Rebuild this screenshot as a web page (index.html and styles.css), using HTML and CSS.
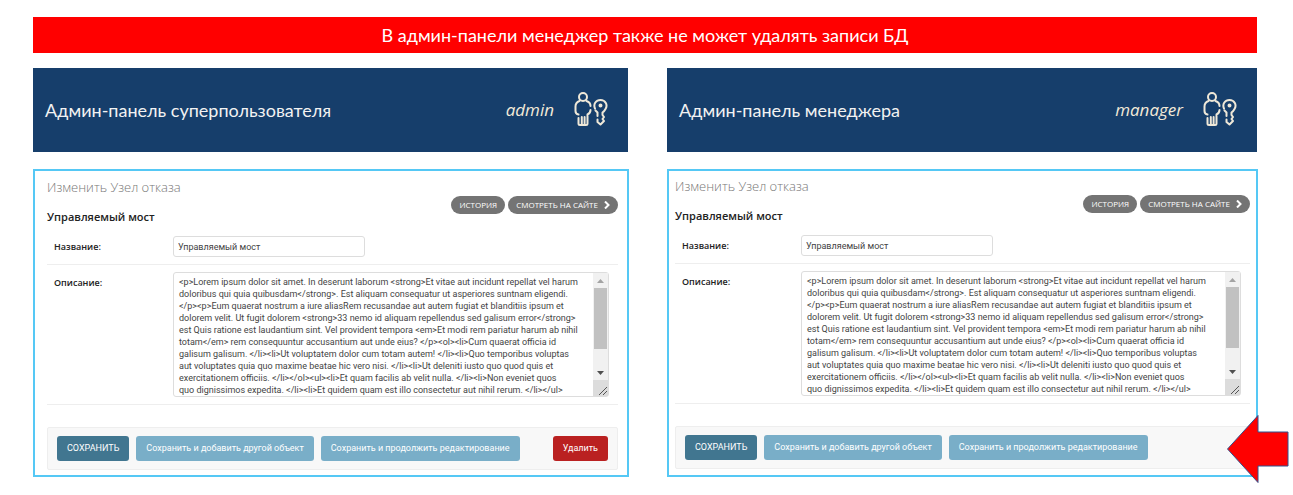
FILE: index.html
```
<!DOCTYPE html>
<html lang="ru">
<head>
<meta charset="utf-8">
<title>Админ-панель</title>
<link rel="stylesheet" href="styles.css">
</head>
<body>
<svg class="sprite" aria-hidden="true">
  <symbol id="user-key" viewBox="0 0 34 36">
    <g fill="none" stroke="#efe8d8" stroke-width="2" stroke-linecap="round" stroke-linejoin="round">
      <circle cx="9" cy="5" r="4"/>
      <path d="M5.500 9C2.500 10 1.500 12 1.500 14.500V19Q1.500 22 4.500 22.500"/>
      <path d="M12.500 9C15.500 10 16.500 12 16.500 14M16.500 18Q16.500 21 13.500 22.500V31.500Q13.500 33 12 33H6Q4.500 33 4.500 31.500V26M7.800 25V32M10.600 25V32"/>
      <path d="M21 16.500C19 12 22 8 26.500 8C31.500 8 34 13 31.500 17Q30.500 19 28.500 20.500V23L30 25L28.500 27L30 29L26.500 32.500L23.500 30V27.500M21.500 18.500L23.500 20.500V24"/>
      <circle cx="26.500" cy="13.500" r="1"/>
    </g>
  </symbol>
  <symbol id="scroll" viewBox="0 0 15 123" preserveAspectRatio="none">
    <path fill="#f1f1f1" d="M0 0H15V107H0Z"/>
    <path fill="#c1c1c1" d="M1 15H14V76H1Z"/>
    <path fill="#a3a3a3" d="M4 10L7.500 6L11 10Z"/>
    <path fill="#505050" d="M4 98L7.500 102L11 98Z"/>
    <path fill="#dcdcdc" d="M0 107H15V123H0Z"/>
    <path fill="none" stroke="#555" d="M6 122L14 114M10 122L14 118"/>
  </symbol>
</svg>
<main class="page">
  <h1 class="banner">В админ-панели менеджер также не может удалять записи БД</h1>

  <header class="head">
    <h2 class="head-title">Админ-панель суперпользователя</h2>
    <span class="role">admin</span>
    <svg class="role-icon" aria-hidden="true"><use href="#user-key"/></svg>
  </header>
  <header class="head">
    <h2 class="head-title">Админ-панель менеджера</h2>
    <span class="role">manager</span>
    <svg class="role-icon" aria-hidden="true"><use href="#user-key"/></svg>
  </header>

  <form class="panel panel-admin">
    <h3 class="title">Изменить Узел отказа</h3>
    <div class="tools">
      <a class="pill" href="#">ИСТОРИЯ</a>
      <a class="pill" href="#">СМОТРЕТЬ НА САЙТЕ <svg class="chevron" viewBox="0 0 6 8" aria-hidden="true"><path d="M1 0.500L4.500 4L1 7.500"/></svg></a>
    </div>
    <h4 class="object">Управляемый мост</h4>
    <div class="row">
      <label class="label" for="name-a">Название:</label>
      <input class="input" id="name-a" type="text" value="Управляемый мост">
    </div>
    <div class="row">
      <label class="label" for="text-a">Описание:</label>
      <div class="area">
        <textarea class="text" id="text-a" wrap="off">&lt;p&gt;Lorem ipsum dolor sit amet. In deserunt laborum &lt;strong&gt;Et vitae aut incidunt repellat vel harum
doloribus qui quia quibusdam&lt;/strong&gt;. Est aliquam consequatur ut asperiores suntnam eligendi.
&lt;/p&gt;&lt;p&gt;Eum quaerat nostrum a iure aliasRem recusandae aut autem fugiat et blanditiis ipsum et
dolorem velit. Ut fugit dolorem &lt;strong&gt;33 nemo id aliquam repellendus sed galisum error&lt;/strong&gt;
est Quis ratione est laudantium sint. Vel provident tempora &lt;em&gt;Et modi rem pariatur harum ab nihil
totam&lt;/em&gt; rem consequuntur accusantium aut unde eius? &lt;/p&gt;&lt;ol&gt;&lt;li&gt;Cum quaerat officia id
galisum galisum. &lt;/li&gt;&lt;li&gt;Ut voluptatem dolor cum totam autem! &lt;/li&gt;&lt;li&gt;Quo temporibus voluptas
aut voluptates quia quo maxime beatae hic vero nisi. &lt;/li&gt;&lt;li&gt;Ut deleniti iusto quo quod quis et
exercitationem officiis. &lt;/li&gt;&lt;/ol&gt;&lt;ul&gt;&lt;li&gt;Et quam facilis ab velit nulla. &lt;/li&gt;&lt;li&gt;Non eveniet quos
quo dignissimos expedita. &lt;/li&gt;&lt;li&gt;Et quidem quam est illo consectetur aut nihil rerum. &lt;/li&gt;&lt;/ul&gt;</textarea>
        <svg class="scroll" aria-hidden="true"><use href="#scroll"/></svg>
      </div>
    </div>
    <div class="submit">
      <button class="btn btn-main" type="button">СОХРАНИТЬ</button>
      <button class="btn" type="button">Сохранить и добавить другой объект</button>
      <button class="btn" type="button">Сохранить и продолжить редактирование</button>
      <button class="btn btn-delete" type="button">Удалить</button>
    </div>
  </form>

  <form class="panel panel-manager">
    <h3 class="title">Изменить Узел отказа</h3>
    <div class="tools">
      <a class="pill" href="#">ИСТОРИЯ</a>
      <a class="pill" href="#">СМОТРЕТЬ НА САЙТЕ <svg class="chevron" viewBox="0 0 6 8" aria-hidden="true"><path d="M1 0.500L4.500 4L1 7.500"/></svg></a>
    </div>
    <h4 class="object">Управляемый мост</h4>
    <div class="row">
      <label class="label" for="name-m">Название:</label>
      <input class="input" id="name-m" type="text" value="Управляемый мост">
    </div>
    <div class="row">
      <label class="label" for="text-m">Описание:</label>
      <div class="area">
        <textarea class="text" id="text-m" wrap="off">&lt;p&gt;Lorem ipsum dolor sit amet. In deserunt laborum &lt;strong&gt;Et vitae aut incidunt repellat vel harum
doloribus qui quia quibusdam&lt;/strong&gt;. Est aliquam consequatur ut asperiores suntnam eligendi.
&lt;/p&gt;&lt;p&gt;Eum quaerat nostrum a iure aliasRem recusandae aut autem fugiat et blanditiis ipsum et
dolorem velit. Ut fugit dolorem &lt;strong&gt;33 nemo id aliquam repellendus sed galisum error&lt;/strong&gt;
est Quis ratione est laudantium sint. Vel provident tempora &lt;em&gt;Et modi rem pariatur harum ab nihil
totam&lt;/em&gt; rem consequuntur accusantium aut unde eius? &lt;/p&gt;&lt;ol&gt;&lt;li&gt;Cum quaerat officia id
galisum galisum. &lt;/li&gt;&lt;li&gt;Ut voluptatem dolor cum totam autem! &lt;/li&gt;&lt;li&gt;Quo temporibus voluptas
aut voluptates quia quo maxime beatae hic vero nisi. &lt;/li&gt;&lt;li&gt;Ut deleniti iusto quo quod quis et
exercitationem officiis. &lt;/li&gt;&lt;/ol&gt;&lt;ul&gt;&lt;li&gt;Et quam facilis ab velit nulla. &lt;/li&gt;&lt;li&gt;Non eveniet quos
quo dignissimos expedita. &lt;/li&gt;&lt;li&gt;Et quidem quam est illo consectetur aut nihil rerum. &lt;/li&gt;&lt;/ul&gt;</textarea>
        <svg class="scroll" aria-hidden="true"><use href="#scroll"/></svg>
      </div>
    </div>
    <div class="submit">
      <button class="btn btn-main" type="button">СОХРАНИТЬ</button>
      <button class="btn" type="button">Сохранить и добавить другой объект</button>
      <button class="btn" type="button">Сохранить и продолжить редактирование</button>
    </div>
    <svg class="arrow" viewBox="0 0 63 70" aria-hidden="true"><path d="M1.500 35L32 1.500V18H62V52H32V68.500Z"/></svg>
  </form>
</main>
</body>
</html>
```
FILE: styles.css
```
* { box-sizing: border-box; }
body { margin: 0; background: #fff; color: #333; font: 9px/12px "Open Sans", "Noto Sans", sans-serif; }
h1, h2, h3, h4 { margin: 0; }
.sprite { position: absolute; width: 0; height: 0; }
.page {
  display: grid;
  grid-template-columns: 595fr 590fr;
  column-gap: 39px;
  padding: 17px 36px 18px 33px;
}
.banner {
  grid-column: 1 / -1;
  margin-bottom: 15px;
  padding: 6px;
  background: #f00;
  color: #fff;
  font: 400 18px/24px Lato, "Open Sans", sans-serif;
  text-align: center;
}
.head {
  display: flex;
  align-items: center;
  padding: 24px 20px 24px 12px;
  margin-bottom: 17px;
  background: #163e6b;
  color: #f2f2f2;
  font: 400 18px/24px Lato, "Open Sans", sans-serif;
}
.head-title { flex: 1; font: inherit; }
.role { color: #f3ead8; font-family: "Open Sans", sans-serif; font-size: 17px; font-style: italic; }
.role-icon { width: 34px; height: 36px; margin-left: 20px; }

.panel {
  position: relative;
  display: grid;
  grid-template-columns: 1fr auto;
  margin-right: -1px;
  border: 2px solid #55c8f5;
}
.panel-admin { padding: 6px 9px 5px 12px; }
.panel-manager { padding: 5px 6px 6px 6px; }
.title { color: #777; font-size: 13px; line-height: 20px; font-weight: 300; }
.tools { grid-row: 1 / 3; grid-column: 2; display: flex; align-self: start; gap: 3px; padding-top: 19px; }
.pill {
  padding: 3px 8px;
  border-radius: 9px;
  background: #747474;
  color: #fff;
  font-size: 8px;
  font-weight: 500;
  text-decoration: none;
}
.chevron { width: 6px; height: 8px; margin-left: 4px; fill: none; stroke: #fff; stroke-width: 2; vertical-align: -1px; }
.object { grid-column: 1; margin-top: 11px; color: #222; font-size: 11px; line-height: 18px; font-weight: 600; }
.row {
  grid-column: 1 / -1;
  display: grid;
  grid-template-columns: 119px 1fr;
  padding: 7px 9px 7px 7px;
  border-bottom: 1px solid #eee;
}
.object + .row { padding-top: 10px; }
.label { padding-top: 5px; color: #222; font-weight: 600; }
.input {
  width: 192px;
  height: 21px;
  padding: 0 4px;
  border: 1px solid #ddd;
  border-radius: 3px;
  background: #fff;
  color: #444;
  font: 9px/12px Roboto, "Open Sans", sans-serif;
}
.area { position: relative; height: 125px; }
.text {
  display: block;
  width: 100%;
  height: 100%;
  padding: 3px 5px;
  border: 1px solid #ddd;
  border-radius: 3px;
  background: #fff;
  color: #444;
  font: 9px/12px Roboto, "Open Sans", sans-serif;
  white-space: pre;
  overflow: hidden;
  resize: none;
}
.scroll { position: absolute; top: 1px; right: 1px; width: 15px; height: 123px; }
.submit {
  grid-column: 1 / -1;
  display: flex;
  gap: 7px;
  margin-top: 22px;
  padding: 8px 9px;
  border: 1px solid #eee;
  border-radius: 2px;
  background: #f8f8f8;
}
.btn {
  padding: 6px 10px;
  border: 0;
  border-radius: 3px;
  background: #79aec8;
  color: #fff;
  font: 9px/13px Roboto, "Open Sans", sans-serif;
  white-space: nowrap;
}
.btn-main { background: #417690; }
.btn-delete { margin-left: auto; background: #ba2121; }
.arrow { position: absolute; right: -33px; bottom: -9px; width: 63px; height: 70px; fill: #f00; stroke: #2f528f; }
```
